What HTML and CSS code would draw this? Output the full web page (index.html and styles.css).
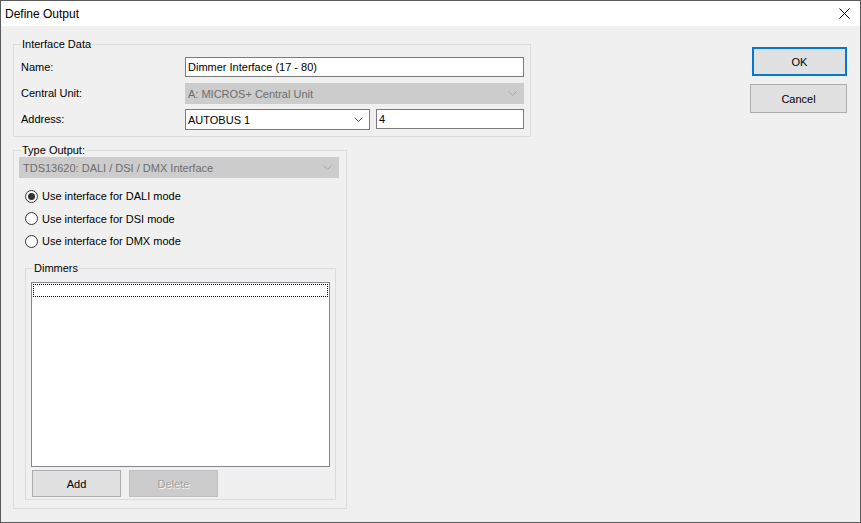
FILE: index.html
```html
<!DOCTYPE html>
<html>
<head>
<meta charset="utf-8">
<link rel="stylesheet" href="styles.css">
</head>
<body>
<div class="window">
  <div class="titlebar">
    <span class="title">Define Output</span>
    <svg class="close" width="11" height="11" viewBox="0 0 11 11"><path d="M0.5 0.5 L10.5 10.5 M10.5 0.5 L0.5 10.5" stroke="#000" stroke-width="1" fill="none"/></svg>
  </div>
  <div class="body">
    <div class="left">
      <fieldset class="group g-iface">
        <legend>Interface Data</legend>
        <div class="form">
          <label class="lbl">Name:</label>
          <div class="textbox">Dimmer Interface (17 - 80)</div>
          <label class="lbl">Central Unit:</label>
          <div class="combo disabled"><span>A: MICROS+ Central Unit</span><svg class="chev" width="9" height="5" viewBox="0 0 9 5"><path d="M0.5 0.5 L4.5 4.5 L8.5 0.5" stroke="#a8a8a8" fill="none"/></svg></div>
          <label class="lbl">Address:</label>
          <div class="addr">
            <div class="combo c-addr"><span>AUTOBUS 1</span><svg class="chev" width="9" height="5" viewBox="0 0 9 5"><path d="M0.5 0.5 L4.5 4.5 L8.5 0.5" stroke="#606060" fill="none"/></svg></div>
            <div class="textbox t-addr">4</div>
          </div>
        </div>
      </fieldset>
      <fieldset class="group g-type">
        <legend>Type Output:</legend>
        <div class="type-inner">
          <div class="combo disabled c-type"><span>TDS13620: DALI / DSI / DMX Interface</span><svg class="chev" width="9" height="5" viewBox="0 0 9 5"><path d="M0.5 0.5 L4.5 4.5 L8.5 0.5" stroke="#a8a8a8" fill="none"/></svg></div>
          <div class="radios">
            <div class="radio-row"><span class="radio checked"></span><span>Use interface for DALI mode</span></div>
            <div class="radio-row"><span class="radio"></span><span>Use interface for DSI mode</span></div>
            <div class="radio-row"><span class="radio"></span><span>Use interface for DMX mode</span></div>
          </div>
          <fieldset class="group g-dim">
            <legend>Dimmers</legend>
            <div class="dim-inner">
              <div class="listbox"><div class="focus-row"></div></div>
              <div class="dim-buttons">
                <button class="btn small">Add</button>
                <button class="btn small disabled">Delete</button>
              </div>
            </div>
          </fieldset>
        </div>
      </fieldset>
    </div>
    <div class="right">
      <button class="btn ok">OK</button>
      <button class="btn cancel">Cancel</button>
    </div>
  </div>
</div>
</body>
</html>
```

FILE: styles.css
```css
html, body {
  margin: 0;
  padding: 0;
  background: #f0f0f0;
}

.window {
  width: 861px;
  height: 523px;
  box-sizing: border-box;
  border: 1px solid #5a5a5a;
  background: #f0f0f0;
  display: flex;
  flex-direction: column;
  font: 11px "Liberation Sans", Arial, sans-serif;
  color: #000;
}

.titlebar {
  height: 25px;
  flex: none;
  background: #fff;
  display: flex;
  align-items: center;
  justify-content: space-between;
  padding: 0 10px 0 4px;
}

.title {
  font-size: 12px;
}

.close {
  display: block;
}

.body {
  flex: 1;
  display: flex;
  padding: 12px 13px 0 12px;
}

.left {
  display: flex;
  flex-direction: column;
  align-items: flex-start;
}

fieldset.group {
  margin: 0;
  padding: 0;
  min-width: 0;
  border: 1px solid #dcdcdc;
  box-sizing: border-box;
}

legend {
  padding: 0 1px;
  margin-left: 7px;
  height: 13px;
  line-height: 13px;
}

.g-iface {
  width: 518px;
}

.form {
  display: grid;
  grid-template-columns: 164px 339px;
  grid-template-rows: 26px 26px 21px;
  align-items: start;
  padding: 6px 6px 6px 7px;
}

.lbl {
  line-height: 20px;
  height: 20px;
}

.textbox {
  box-sizing: border-box;
  height: 20px;
  border: 1px solid #7a7a7a;
  background: #fff;
  padding-left: 2px;
  line-height: 18px;
  white-space: nowrap;
}

.combo {
  box-sizing: border-box;
  height: 21px;
  border: 1px solid #7a7a7a;
  background: #fff;
  display: flex;
  align-items: center;
  justify-content: space-between;
  padding: 0 6px 0 2px;
  white-space: nowrap;
}

.combo.disabled {
  background: #cccccc;
  border-color: #cccccc;
  color: #6d6d6d;
}

.chev {
  display: block;
}

.addr {
  display: flex;
  gap: 6px;
}

.c-addr {
  width: 185px;
}

.t-addr {
  width: 148px;
}

.g-type {
  width: 334px;
  margin-top: 7px !important;
}

.type-inner {
  padding: 0 7px 8px 5px;
}

.c-type {
  width: 320px;
  padding-left: 3px;
}

.radios {
  margin-top: 7px;
  display: flex;
  flex-direction: column;
}

.radio-row {
  height: 22.5px;
  display: flex;
  align-items: center;
}

.radio {
  width: 13px;
  height: 13px;
  box-sizing: border-box;
  border: 1px solid #333;
  border-radius: 50%;
  background: #fff;
  margin-left: 6px;
  margin-right: 4px;
  display: flex;
  align-items: center;
  justify-content: center;
}

.radio.checked::after {
  content: "";
  width: 7px;
  height: 7px;
  border-radius: 50%;
  background: #333;
}

.g-dim {
  width: 311px;
  margin: 9.5px 0 0 6px !important;
}

.dim-inner {
  padding: 7px 5px 2px 5px;
}

.listbox {
  box-sizing: border-box;
  width: 299px;
  height: 185px;
  border: 1px solid #828790;
  background: #fff;
  padding: 1px;
}

.focus-row {
  box-sizing: border-box;
  height: 13px;
  border: 1px dotted #000;
}

.dim-buttons {
  display: flex;
  gap: 8px;
  margin-top: 3px;
  padding-left: 1px;
}

.btn {
  box-sizing: border-box;
  background: #e1e1e1;
  border: 1px solid #adadad;
  font: inherit;
  color: #000;
  padding: 0;
  margin: 0;
}

.btn.small {
  width: 89px;
  height: 27px;
}

.btn.disabled {
  background: #cccccc;
  border-color: #bfbfbf;
  color: #a0a0a0;
  text-shadow: 1px 1px 0 #f4f4f4;
}

.right {
  margin-left: auto;
  padding-top: 9px;
  display: flex;
  flex-direction: column;
  align-items: flex-end;
}

.ok {
  width: 95px;
  height: 29px;
  border: 2px solid #0078d7;
}

.cancel {
  width: 97px;
  height: 29px;
  margin-top: 8px;
}
```
